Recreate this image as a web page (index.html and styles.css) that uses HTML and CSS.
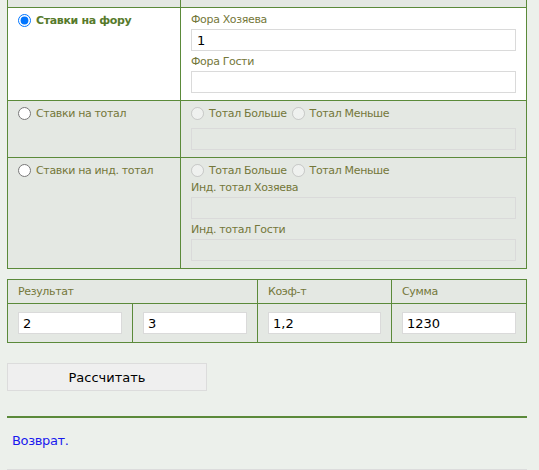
FILE: index.html
```html
<!DOCTYPE html>
<html lang="ru">
<head>
  <meta charset="UTF-8" />
  <title>Калькулятор ставок</title>
  <link rel="stylesheet" href="styles.css">
</head>
<body>
  <div class="page">
    <table class="bets">
      <colgroup>
        <col class="kind-col">
        <col>
      </colgroup>
      <tr class="head">
        <td></td>
        <td></td>
      </tr>
      <tr class="open">
        <td class="kind">
          <label class="opt"><input type="radio" name="bet" checked><b>Ставки на фору</b></label>
        </td>
        <td class="fields">
          <div class="lbl">Фора Хозяева</div>
          <input type="text" class="txt" value="1">
          <div class="lbl">Фора Гости</div>
          <input type="text" class="txt">
        </td>
      </tr>
      <tr>
        <td class="kind">
          <label class="opt"><input type="radio" name="bet">Ставки на тотал</label>
        </td>
        <td class="fields">
          <div class="radios wide">
            <label class="opt"><input type="radio" name="total" disabled>Тотал Больше</label>
            <label class="opt"><input type="radio" name="total" disabled>Тотал Меньше</label>
          </div>
          <input type="text" class="txt" disabled>
        </td>
      </tr>
      <tr>
        <td class="kind">
          <label class="opt"><input type="radio" name="bet">Ставки на инд. тотал</label>
        </td>
        <td class="fields">
          <div class="radios">
            <label class="opt"><input type="radio" name="itotal" disabled>Тотал Больше</label>
            <label class="opt"><input type="radio" name="itotal" disabled>Тотал Меньше</label>
          </div>
          <div class="lbl">Инд. тотал Хозяева</div>
          <input type="text" class="txt" disabled>
          <div class="lbl">Инд. тотал Гости</div>
          <input type="text" class="txt" disabled>
        </td>
      </tr>
    </table>

    <table class="result">
      <colgroup>
        <col class="c1">
        <col class="c2">
        <col class="c3">
        <col>
      </colgroup>
      <tr>
        <th colspan="2">Результат</th>
        <th>Коэф-т</th>
        <th>Сумма</th>
      </tr>
      <tr>
        <td><input type="text" class="txt" value="2"></td>
        <td><input type="text" class="txt" value="3"></td>
        <td><input type="text" class="txt" value="1,2"></td>
        <td><input type="text" class="txt" value="1230"></td>
      </tr>
    </table>

    <button class="calc">Рассчитать</button>

    <div class="footer">
      <a href="#">Возврат.</a>
    </div>
  </div>
</body>
</html>
```

FILE: styles.css
```css
body {
  font-family: "DejaVu Sans", Verdana, sans-serif;
  font-size: 11px;
  letter-spacing: -0.35px;
  background: #ecf0eb;
  color: #74773a;
  margin: 0;
}
.page {
  width: 520px;
  margin-left: 7px;
}
table {
  width: 100%;
  border-collapse: collapse;
  table-layout: fixed;
}
td, th {
  border: 1px solid #5b8a3a;
  background: #e4e8e3;
  vertical-align: top;
  padding: 4px 10px;
  text-align: left;
  font-weight: normal;
}
.kind-col { width: 173px; }
.bets tr.head td {
  border-top: 0;
  height: 7px;
  padding: 0;
}
.bets tr.open td { background: #fff; }
.opt {
  display: inline-flex;
  align-items: center;
  gap: 5px;
  height: 16px;
  margin-right: 5px;
}
.opt input {
  margin: 0;
  width: 13px;
  height: 13px;
}
.opt b { color: #577a2c; }
.radios {
  display: flex;
  height: 17px;
  margin-bottom: 1px;
}
.radios.wide { margin-bottom: 6px; }
.lbl {
  line-height: 16px;
  margin-bottom: 1px;
}
.txt {
  display: block;
  box-sizing: border-box;
  width: 100%;
  height: 22px;
  margin: 0 0 3px;
  padding: 0 5px;
  border: 1px solid #dadada;
  background: #fff;
  font-family: "DejaVu Sans", Verdana, sans-serif;
  font-size: 13px;
  color: #000;
}
.txt:disabled { background: #e4e8e3; }
.result { margin-top: 10px; }
.result .c1, .result .c2 { width: 125px; }
.result .c3 { width: 134px; }
.result th {
  padding: 3px 10px;
  line-height: 17px;
}
.result td { padding: 8px 10px; }
.result .txt { margin: 0; padding: 0 4px; }
.calc {
  display: block;
  width: 200px;
  height: 28px;
  margin-top: 20px;
  background: #efefef;
  border: 1px solid #dcdcdc;
  font-family: "DejaVu Sans", Verdana, sans-serif;
  font-size: 13px;
  color: #000;
}
.footer {
  margin-top: 25px;
  border-top: 2px solid #5b8a3a;
  border-bottom: 1px solid #dcdcdc;
  padding: 15px 5px 20px;
  font-size: 13px;
  line-height: 16px;
}
.footer a {
  color: #1a1aee;
  text-decoration: none;
}
```
